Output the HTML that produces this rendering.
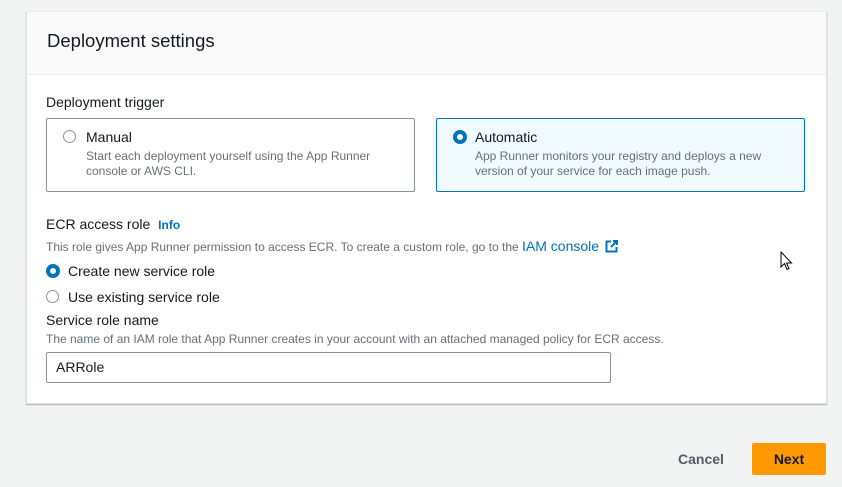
<!DOCTYPE html>
<html><head><style>
body{margin:0;width:842px;height:487px;background:#f2f3f3;font-family:"Liberation Sans",sans-serif;position:relative;overflow:hidden;color:#16191f}
.a{position:absolute;white-space:nowrap}
.panel{position:absolute;left:26px;top:11px;width:799px;height:391px;background:#fff;border:1px solid #e0e0e0;border-top:1px solid #eaeded;box-shadow:0 1px 1px rgba(0,28,36,.3)}
.hdr{position:absolute;left:0;top:0;width:799px;height:62px;background:#fafafa;border-bottom:1px solid #eaeded}
.box{position:absolute;top:118px;width:367px;height:72px;border:1px solid #879596;border-radius:2px}
.r{position:absolute;width:11px;height:11px;border:1.5px solid #879596;border-radius:50%;background:#fff}
.rs{position:absolute;width:6px;height:6px;border:4px solid #0073bb;border-radius:50%;background:#fff}
.d{font-size:12px;color:#687078;line-height:15px}
</style></head><body>
<div class="panel"><div class="hdr"></div></div>
<div class="a" style="left:47px;top:30px;font-size:18.5px">Deployment settings</div>
<div class="a" style="left:46px;top:94px;font-size:14px">Deployment trigger</div>
<div class="box" style="left:46px"></div>
<div class="box" style="left:436px;background:#f1faff;border-color:#0073bb"></div>
<div class="r" style="left:63px;top:130px"></div>
<div class="a" style="left:86px;top:129px;font-size:14px">Manual</div>
<div class="a d" style="left:86px;top:149px">Start each deployment yourself using the App Runner<br>console or AWS CLI.</div>
<div class="rs" style="left:453px;top:130px"></div>
<div class="a" style="left:475px;top:129px;font-size:14px">Automatic</div>
<div class="a d" style="left:475px;top:149px">App Runner monitors your registry and deploys a new<br>version of your service for each image push.</div>
<div class="a" style="left:46px;top:216px;font-size:14px">ECR access role <span style="color:#0073bb;font-weight:bold;font-size:12px;margin-left:4px">Info</span></div>
<div class="a d" style="left:46px;top:239px">This role gives App Runner permission to access ECR. To create a custom role, go to the <span style="color:#0073bb;font-size:14px">IAM console</span>
<svg width="13" height="13" viewBox="0 0 13 13" style="vertical-align:-2px;margin-left:3px"><path d="M6 1.5H1.5v10h10V7M8 1h4v4M12 1L6 7" fill="none" stroke="#0073bb" stroke-width="2"/></svg></div>
<div class="rs" style="left:46px;top:264px"></div>
<div class="a" style="left:68px;top:263px;font-size:14px">Create new service role</div>
<div class="r" style="left:46px;top:290px"></div>
<div class="a" style="left:68px;top:289px;font-size:14px">Use existing service role</div>
<div class="a" style="left:46px;top:312px;font-size:14px">Service role name</div>
<div class="a d" style="left:46px;top:332px">The name of an IAM role that App Runner creates in your account with an attached managed policy for ECR access.</div>
<div class="a" style="left:46px;top:352px;width:563px;height:29px;border:1px solid #879596;border-radius:2px;background:#fff"></div>
<div class="a" style="left:56px;top:359px;font-size:14px">ARRole</div>
<svg class="a" style="left:780px;top:251px" width="14" height="20" viewBox="0 0 14 20"><path d="M1 1v15l3.5-3.5 2.5 6 2-1-2.5-5.5h5z" fill="#fff" stroke="#000" stroke-width="1"/></svg>
<div class="a" style="left:678px;top:451px;font-size:14px;font-weight:bold;color:#545b64">Cancel</div>
<div class="a" style="left:752px;top:443px;width:74px;height:32px;background:#ff9900;border-radius:2px;font-size:14px;font-weight:bold;color:#16191f;text-align:center;line-height:32px">Next</div>
</body></html>
